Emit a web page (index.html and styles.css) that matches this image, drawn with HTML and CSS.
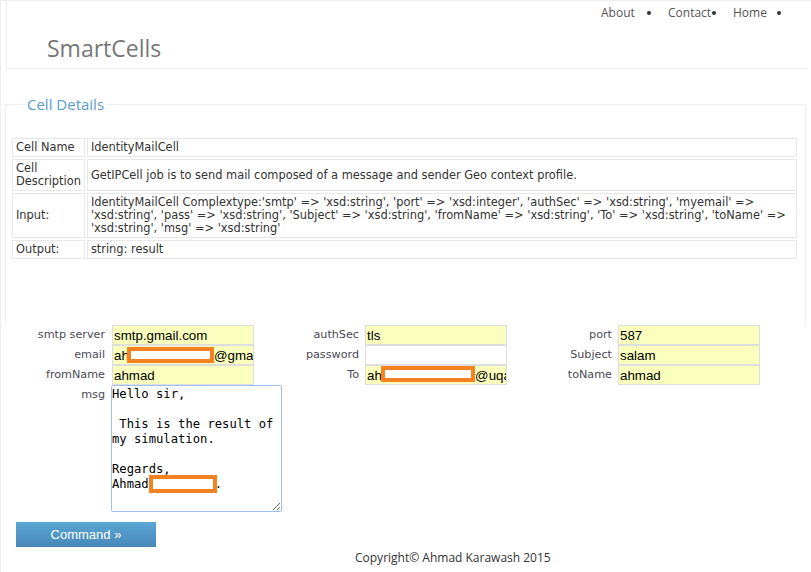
FILE: index.html
```html
<!DOCTYPE html>
<html lang="en">
<head>
<meta charset="utf-8">
<title>SmartCells - Cell Details</title>
<link rel="stylesheet" href="styles.css">
</head>
<body>
<div class="page">
  <header class="top">
    <nav class="nav">
      <ul>
        <li><span class="nav-w about">About</span></li>
        <li><span class="nav-w contact">Contact</span></li>
        <li><span class="nav-w home">Home</span></li>
      </ul>
    </nav>
    <h1 class="brand">SmartCells</h1>
  </header>

  <fieldset class="details">
    <legend>Cell Details</legend>
    <table class="cell-table">
      <tr><td class="k">Cell Name</td><td class="v">IdentityMailCell</td></tr>
      <tr><td class="k">Cell Description</td><td class="v">GetIPCell job is to send mail composed of a message and sender Geo context profile.</td></tr>
      <tr><td class="k">Input:</td><td class="v">IdentityMailCell Complextype:'smtp' =&gt; 'xsd:string', 'port' =&gt; 'xsd:integer', 'authSec' =&gt; 'xsd:string', 'myemail' =&gt; 'xsd:string', 'pass' =&gt; 'xsd:string', 'Subject' =&gt; 'xsd:string', 'fromName' =&gt; 'xsd:string', 'To' =&gt; 'xsd:string', 'toName' =&gt; 'xsd:string', 'msg' =&gt; 'xsd:string'</td></tr>
      <tr><td class="k">Output:</td><td class="v">string: result</td></tr>
    </table>
  </fieldset>

  <form class="cell-form">
    <label class="lbl">smtp server</label>
    <div class="fld first"><input class="inp filled" type="text" value="smtp.gmail.com"></div>
    <label class="lbl">authSec</label>
    <div class="fld"><input class="inp filled" type="text" value="tls"></div>
    <label class="lbl">port</label>
    <div class="fld"><input class="inp filled" type="text" value="587"></div>

    <label class="lbl">email</label>
    <div class="fld first"><input class="inp filled" type="text" value="ahxxxxxxxxxxxnr@gmail.com"><span class="redact r-email"></span></div>
    <label class="lbl">password</label>
    <div class="fld"><input class="inp" type="password" value=""></div>
    <label class="lbl">Subject</label>
    <div class="fld"><input class="inp filled" type="text" value="salam"></div>

    <label class="lbl">fromName</label>
    <div class="fld first"><input class="inp filled" type="text" value="ahmad"></div>
    <label class="lbl">To</label>
    <div class="fld"><input class="inp filled" type="text" value="ahxxxxxxxxxxxxxx@uqac.ca"><span class="redact r-to"></span></div>
    <label class="lbl">toName</label>
    <div class="fld"><input class="inp filled" type="text" value="ahmad"></div>

    <label class="lbl msg-lbl">msg</label>
    <div class="fld msg-fld"><textarea class="msg">Hello sir,

 This is the result of my simulation.

Regards,
Ahmad xxxxxxxx.</textarea><span class="redact r-msg"></span></div>
  </form>

  <button class="cmd" type="button">Command »</button>

  <footer class="foot">Copyright© Ahmad Karawash 2015</footer>
</div>
</body>
</html>
```
FILE: styles.css
```css
html, body {
  margin: 0;
  padding: 0;
  background: #fff;
}
body {
  font-family: "DejaVu Sans", Verdana, sans-serif;
  color: #333;
  width: 811px;
  height: 572px;
  overflow: hidden;
  box-sizing: border-box;
  border-top: 1px solid #eeeeee;
  border-left: 1px solid #eeeeee;
}
.page {
  position: relative;
}

/* header */
.top {
  margin-left: 5px;
  margin-right: 5px;
  border-bottom: 1px solid #eeeeee;
  border-left: 1px solid #eeeeee;
  padding-bottom: 5px;
}
.nav ul {
  list-style: none;
  margin: 0;
  padding: 4px 25px 0 0;
  display: flex;
  justify-content: flex-end;
  gap: 17px;
  font-family: "Open Sans", sans-serif;
  font-size: 12px;
  line-height: 16px;
  color: #555;
}
.nav li {
  display: flex;
  align-items: center;
}
.nav-w { display: block; }
.about { width: 46px; }
.contact { width: 44px; }
.home { width: 44px; }
.nav li::after {
  content: "";
  width: 4px;
  height: 4px;
  border-radius: 50%;
  background: #333;
}
.brand {
  margin: 12px 0 0 40px;
  font-family: "Open Sans", sans-serif;
  font-weight: 400;
  font-size: 23px;
  line-height: 30px;
  color: #777;
}

/* fieldset */
.details {
  margin: 25px 5px 0 4px;
  border: 1px solid #eeeeee;
  border-bottom: none;
  padding: 24px 6px 64px 6px;
  min-width: 0;
}
.details legend {
  margin-left: 13px;
  padding: 0 2px;
  font-family: "Open Sans", sans-serif;
  font-size: 15px;
  line-height: 20px;
  color: #5a9bd0;
}
.cell-table {
  border-collapse: separate;
  border-spacing: 2px;
  margin: -2px 0 0 -2px;
  width: calc(100% + 2px);
  font-size: 11.4px;
  line-height: 13px;
  color: #333;
}
.cell-table td {
  border: 1px solid #e8e8e8;
  padding: 2px 3px;
  vertical-align: middle;
}
.cell-table td.k {
  width: 1%;
}

/* form */
.cell-form {
  display: grid;
  grid-template-columns: 110px 143px 111px 142px 111px 142px;
  grid-template-rows: 20px 20px 20px auto;
}
.lbl {
  text-align: right;
  padding-right: 6px;
  font-size: 11.2px;
  line-height: 20px;
  color: #4a4a55;
  white-space: nowrap;
}
.fld {
  position: relative;
}
.fld.first {
  padding-left: 1px;
}
.inp {
  display: block;
  box-sizing: border-box;
  width: 142px;
  height: 20px;
  margin: 0;
  padding: 0 0 0 1px;
  border: 1px solid #dedede;
  background: #fff;
  font-family: "Liberation Sans", Arial, sans-serif;
  font-size: 13.333px;
  color: #000;
  outline: none;
}
.inp.filled {
  background: #faffbd;
}
.msg {
  display: block;
  box-sizing: border-box;
  width: 171px;
  height: 127px;
  margin: 0;
  padding: 1px 0 0 0;
  border: 1px solid #9fc0f2;
  border-radius: 2px;
  font-family: "DejaVu Sans Mono", monospace;
  font-size: 12.2px;
  line-height: 15px;
  color: #000;
  outline: none;
  overflow: hidden;
  resize: both;
}
.redact {
  position: absolute;
  box-sizing: border-box;
  border: 4px solid #f58220;
  background: #fff;
}
.r-email { left: 16px; top: 2px; width: 87px; height: 16px; }
.r-to { left: 16px; top: 1px; width: 94px; height: 16px; }
.r-msg { left: 38px; top: 90px; width: 68px; height: 18px; }

/* button */
.cmd {
  display: block;
  margin: 10px 0 0 15px;
  width: 140px;
  height: 25px;
  border: none;
  padding: 0;
  background: linear-gradient(#5ba6d6, #4787b8);
  color: #fff;
  font-family: "Liberation Sans", Arial, sans-serif;
  font-size: 13px;
}

/* footer */
.foot {
  margin: 3px 0 0 354px;
  font-family: "Open Sans", sans-serif;
  font-size: 12px;
  line-height: 16px;
  color: #333;
}
```
